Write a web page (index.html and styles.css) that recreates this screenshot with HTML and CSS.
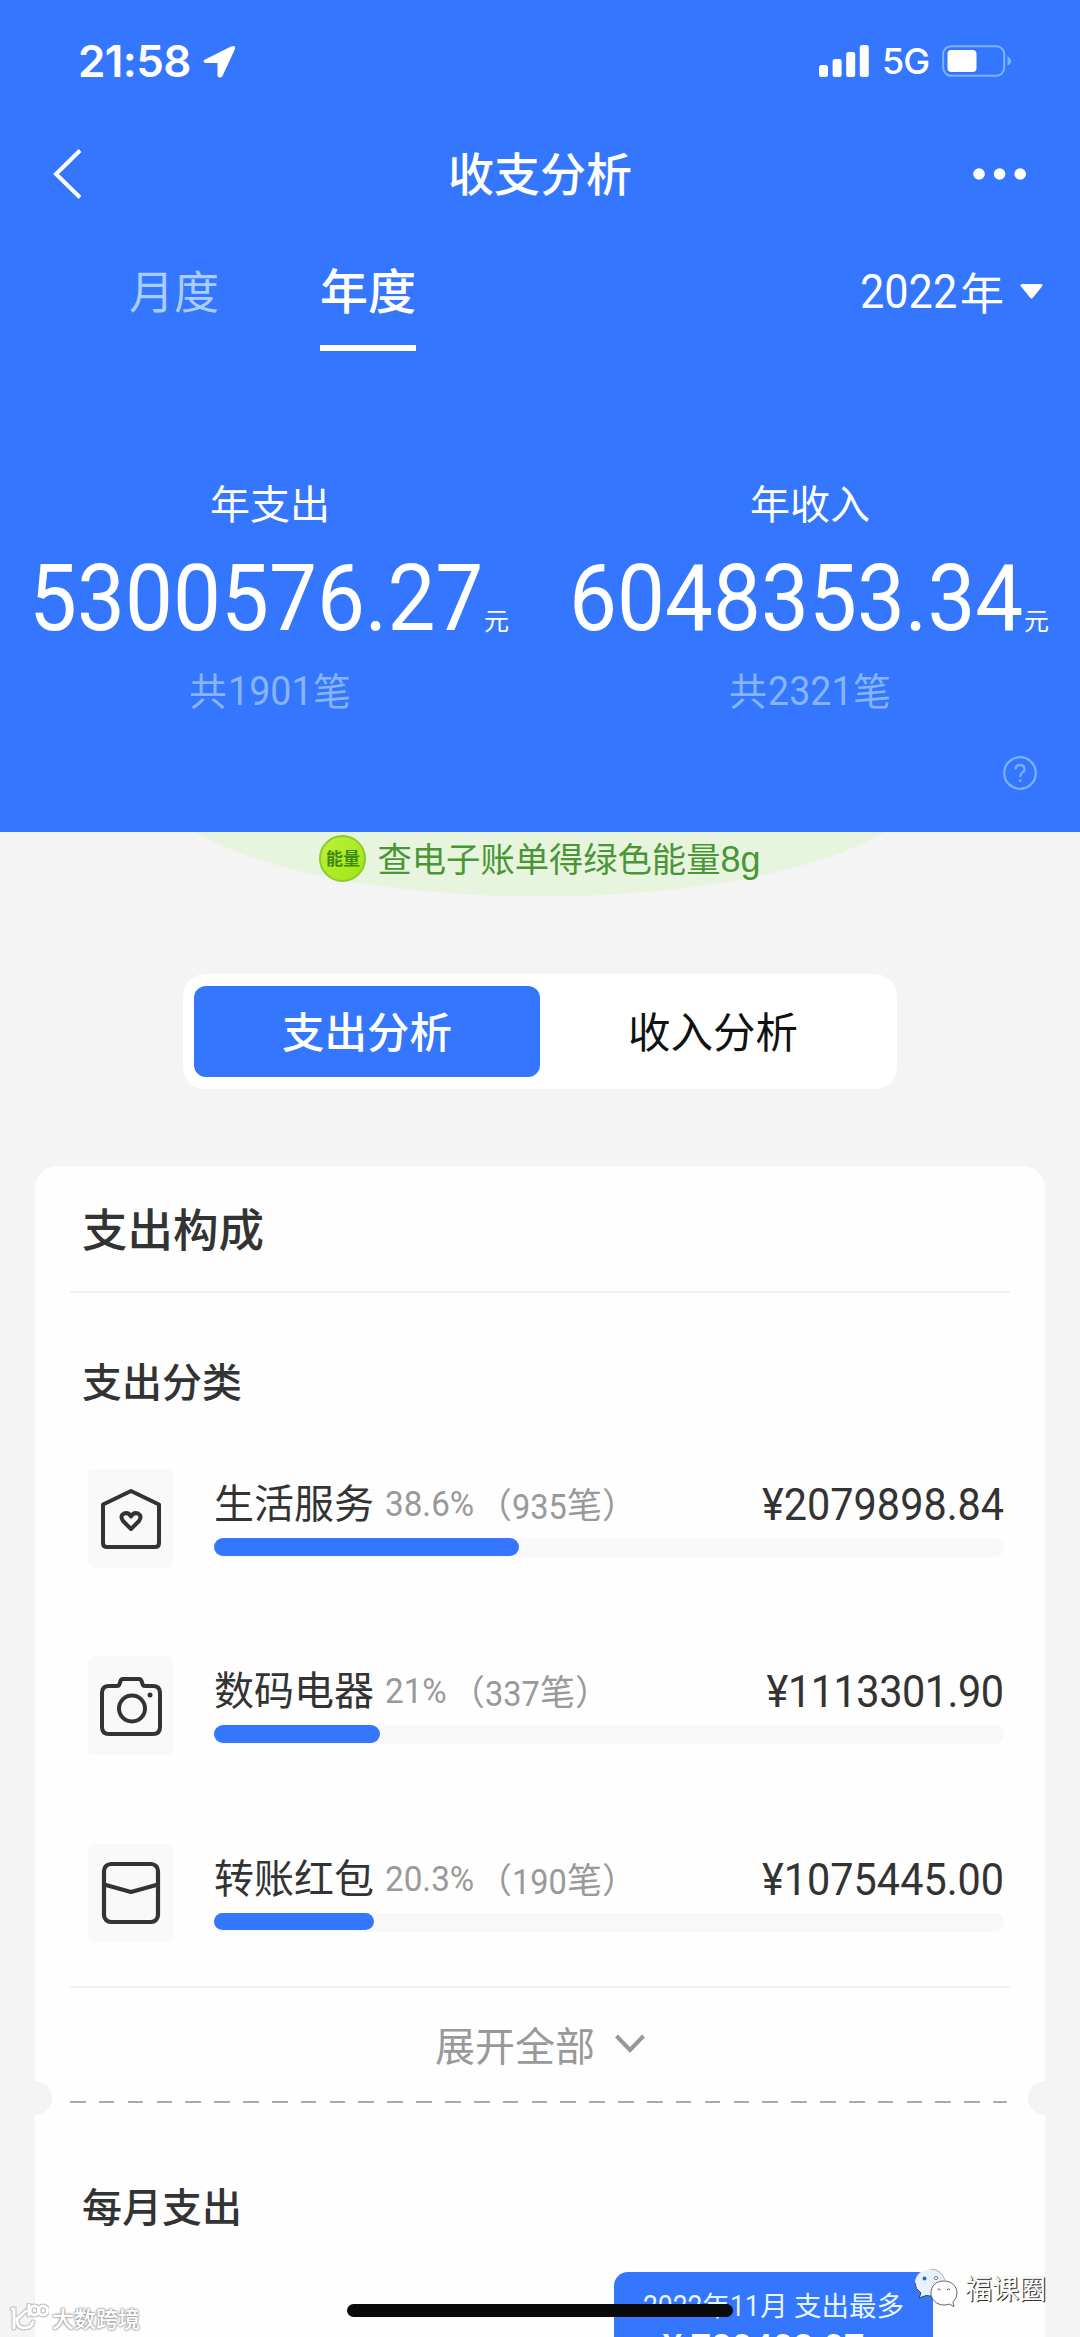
FILE: index.html
```html
<!DOCTYPE html>
<html lang="zh-CN">
<head>
<meta charset="utf-8">
<title>收支分析</title>
<link rel="stylesheet" href="styles.css">
</head>
<body>
<div class="screen">
  <header class="header">
    <div class="status">
      <span class="clock">21:58</span>
      <svg class="locate" width="34" height="35" viewBox="0 0 34 35"><path d="M3 15.500 29 2.500Q34 .500 33 5L20.500 32Q18 35 15.500 32V19H4Q-.500 18 3 15.500Z" fill="#fff"/></svg>
      <span class="status-right">
        <svg width="50" height="32" viewBox="0 0 50 32" fill="#fff"><rect x="0" y="20" width="9" height="12" rx="2.500"/><rect x="13.600" y="14" width="9" height="18" rx="2.500"/><rect x="27.200" y="7" width="9" height="25" rx="2.500"/><rect x="40.800" y="0" width="9" height="32" rx="2.500"/></svg>
        <span class="net">5G</span>
        <svg width="70" height="32" viewBox="0 0 70 32"><rect x="1.200" y="1.200" width="61" height="29.600" rx="8" fill="none" stroke="#7db2ff" stroke-width="2"/><rect x="5.500" y="5" width="29" height="22" rx="4" fill="#fff"/><path d="M65.500 11.500Q69 13 69 16T65.500 20.500Z" fill="#7db2ff"/></svg>
      </span>
    </div>
    <nav class="nav">
      <svg width="30" height="50" viewBox="0 0 30 50"><path d="M27 1.500 3 25 27 48.500" fill="none" stroke="#fff" stroke-width="4"/></svg>
      <h1>收支分析</h1>
      <svg width="54" height="12" viewBox="0 0 54 12" fill="#fff"><circle cx="6" cy="6" r="5.800"/><circle cx="26.600" cy="6" r="5.800"/><circle cx="47.200" cy="6" r="5.800"/></svg>
    </nav>
    <div class="tabs">
      <span class="tab">月度</span>
      <span class="tab active">年度</span>
      <span class="year"><span class="num year-num">2022</span><span class="year-unit">年</span>
        <svg width="23" height="15" viewBox="0 0 23 15"><path d="M2 0H21Q23.500 .500 22 2.500L13 13.500Q11.500 15.500 10 13.500L1 2.500Q-.500 .500 2 0Z" fill="#fff"/></svg></span>
    </div>
    <div class="stats">
      <div class="stat">
        <div class="stat-label">年支出</div>
        <div class="stat-value"><span class="num big-num">5300576.27</span><small>元</small></div>
        <div class="stat-count">共<span class="num count-num">1901</span>笔</div>
      </div>
      <div class="stat">
        <div class="stat-label">年收入</div>
        <div class="stat-value"><span class="num big-num">6048353.34</span><small>元</small></div>
        <div class="stat-count">共<span class="num count-num">2321</span>笔</div>
      </div>
    </div>
    <div class="help">
      <svg width="36" height="36" viewBox="0 0 36 36" fill="none" stroke="#7caefc" stroke-width="2.300"><circle cx="18" cy="18" r="15.800"/><path d="M13.500 14.500Q13.500 10 18 10T22.500 14Q22.500 16.200 20.300 17.600Q18.200 19 18.200 22M18.200 24.500V27"/></svg>
    </div>
  </header>

  <main>
    <div class="energy">
      <span class="energy-badge">能量</span>
      <span class="energy-text">查电子账单得绿色能量<span class="grams">8g</span></span>
    </div>

    <div class="segment">
      <span class="seg on">支出分析</span>
      <span class="seg">收入分析</span>
    </div>

    <section class="card">
      <h2>支出构成</h2>
      <h3>支出分类</h3>
      <ul class="list">
        <li>
          <span class="icon"><svg width="64" height="64" viewBox="0 0 64 64" fill="none" stroke="#333" stroke-width="4" stroke-linejoin="round"><path d="M32 4 60 17.500V56Q60 60 56 60H8Q4 60 4 56V17.500Z"/><path d="M32 42 24 34Q20.500 29 25 26.500Q29.500 25 32 29.500Q34.500 25 39 26.500Q43.500 29 40 34Z"/></svg></span>
          <div class="body">
            <div class="line"><span class="name">生活服务</span><span class="pct num">38.6%</span><span class="cnt">（<span class="num cnt-num">935</span>笔）</span><span class="amt num">¥2079898.84</span></div>
            <div class="track"><div class="fill" style="width:38.6%"></div></div>
          </div>
        </li>
        <li>
          <span class="icon"><svg width="64" height="64" viewBox="0 0 64 64" fill="none" stroke="#333" stroke-width="4" stroke-linejoin="round"><path d="M10 12H18Q20 12 20.500 10L21.500 7Q22 5 24 5H40Q42 5 42.500 7L43.500 10Q44 12 46 12H54Q61 12 61 19V53Q61 60 54 60H10Q3 60 3 53V19Q3 12 10 12Z"/><circle cx="33" cy="34.500" r="13"/><circle cx="51" cy="21" r="2.500" fill="#333" stroke="none"/></svg></span>
          <div class="body">
            <div class="line"><span class="name">数码电器</span><span class="pct short num">21%</span><span class="cnt">（<span class="num cnt-num">337</span>笔）</span><span class="amt tight num">¥1113301.90</span></div>
            <div class="track"><div class="fill" style="width:21%"></div></div>
          </div>
        </li>
        <li>
          <span class="icon"><svg width="64" height="64" viewBox="0 0 64 64" fill="none" stroke="#333" stroke-width="4.200" stroke-linejoin="round"><rect x="5" y="3" width="54" height="58" rx="7"/><path d="M5 23.500 32 31 59 23.500"/></svg></span>
          <div class="body">
            <div class="line"><span class="name">转账红包</span><span class="pct num">20.3%</span><span class="cnt">（<span class="num cnt-num">190</span>笔）</span><span class="amt num">¥1075445.00</span></div>
            <div class="track"><div class="fill" style="width:20.3%"></div></div>
          </div>
        </li>
      </ul>
      <div class="more">展开全部
        <svg width="30" height="20" viewBox="0 0 30 20"><path d="M1.500 2 15 16 28.500 2" fill="none" stroke="#999" stroke-width="4"/></svg>
      </div>
      <div class="ticket"></div>
      <h3 class="monthly">每月支出</h3>
      <div class="tip">
        <div class="tip-title"><span class="num tip-num">2022</span>年<span class="num tip-num2">11</span>月 支出最多</div>
        <div class="tip-amount">¥ 780408.07 ›</div>
      </div>
    </section>
  </main>

  <div class="home-bar"></div>

  <div class="mark-left">
    <svg width="40" height="30" viewBox="0 0 40 30" fill="none" stroke-linecap="round"><g stroke="#bbb" stroke-width="5"><path d="M3 6H5V25M17 8 8 16Q8 25 15 25T24 19M20 2V12"/><circle cx="25.500" cy="7.500" r="4.500"/><circle cx="34" cy="7.500" r="4.500"/></g><g stroke="#fff" stroke-width="3"><path d="M3 6H5V25M17 8 8 16Q8 25 15 25T24 19M20 2V12"/><circle cx="25.500" cy="7.500" r="4.500"/><circle cx="34" cy="7.500" r="4.500"/></g></svg>
    <span>大数跨境</span>
  </div>
  <div class="mark-right">
    <svg width="46" height="40" viewBox="0 0 46 40"><path d="M17 1C8 1 1 7 1 15Q1 21 7 25L5 30 12 27.500Q26 30 31 20L31 12Q28 1 17 1Z" fill="#e9f1ff"/><path d="M1 15Q1 21 7 25L5 30 12 27.500 17 28" fill="none" stroke="#345" stroke-width="1"/><path d="M17 1Q27 1.500 31 12" fill="none" stroke="#999" stroke-width=".800"/><circle cx="10.500" cy="10.500" r="2" fill="#2866df"/><circle cx="22" cy="10" r="1.600" fill="none" stroke="#666" stroke-width=".800"/><path d="M30 13C22 13 17 18 17 25S23 37 30 37Q33 37 35 36L40 38.500 39 34Q43 30 43 25C43 18 37 13 30 13Z" fill="#fff" stroke="#555" stroke-width=".900"/><path d="M23.500 22Q25 19.500 26.500 22M33 22Q34.500 19.500 36 22" fill="none" stroke="#555" stroke-width="1"/></svg>
    <span>福课圈</span>
  </div>
</div>
</body>
</html>
```
FILE: styles.css
```css
* { box-sizing: border-box; margin: 0; padding: 0; }
body { background: #f4f4f4; font-family: "Noto Sans CJK SC", sans-serif; color: #333; }
svg { display: block; flex: none; }
.screen { position: relative; width: 1080px; height: 2337px; overflow: hidden; background: #f4f4f4; white-space: nowrap; line-height: 1; }
.num { display: inline-block; font-family: Roboto, sans-serif; transform: scaleX(.91); transform-origin: left center; }

/* Header */
.header { height: 832px; background: #3476fe; color: #fff; }
.status { display: flex; align-items: center; height: 122px; padding: 0 68px 0 78px; }
.clock { font: 600 44px/1 Inter, sans-serif; letter-spacing: -.6px; width: 124px; }
.status-right { display: flex; align-items: center; margin-left: auto; }
.net { font: 500 36px/1 Inter, sans-serif; width: 60px; margin-left: 13px; letter-spacing: -1px; }
.nav { display: grid; grid-template-columns: 1fr auto 1fr; align-items: center; height: 104px; padding: 0 53px; }
.nav svg:last-child { justify-self: end; }
.nav h1 { padding-bottom: 6px; font-size: 46px; font-weight: 500; }
.tabs { display: flex; height: 125px; padding-left: 129px; }
.tab { font-size: 45px; color: #a9cdff; height: 125px; padding: 41px 0 0; margin-right: 101px; }
.tab.active { font-size: 48px; font-weight: 500; color: #fff; border-bottom: 6px solid #fff; padding-top: 38px; margin-right: 0; }
.year { display: flex; align-items: center; margin: 0 37px 0 auto; font-size: 44px; padding-top: 6px; }
.year-num { font-size: 47.500px; margin-right: -7px; padding-top: 2px; }
.year-unit { padding-bottom: 1px; }
.year svg { margin-left: 16px; }
.stats { display: grid; grid-template-columns: 1fr 1fr; padding-top: 127px; }
.stat { display: flex; flex-direction: column; align-items: center; }
.stat-label { height: 52px; line-height: 48px; font-size: 40px; }
.stat-value { display: flex; align-items: baseline; align-self: stretch; height: 135px; line-height: 137px; padding-left: 29px; }
.big-num { font-size: 93px; width: 455px; transform: scaleX(.918); }
.stat-value small { font-size: 25px; }
.stat-count { height: 50px; line-height: 48px; font-size: 38px; color: #86b4fd; }
.count-num { margin: 0 -5px 0 1px; font-size: 40px; transform: scaleX(.94); }
.help { display: flex; justify-content: flex-end; margin-top: 40px; padding-right: 42px; }

/* Energy strip */
.energy { display: flex; justify-content: center; height: 65px; width: 690px; margin: 0 auto; padding-top: 3px; align-items: flex-start; background: radial-gradient(ellipse 385px 115px at 50% -50px, #e7f5de 99%, transparent 100%); color: #4a9637; font-size: 34.300px; }
.energy-text { line-height: 44px; }
.grams { font-family: "Liberation Sans", sans-serif; font-size: 36px; }
.energy-badge { width: 47px; height: 47px; margin-right: 11px; border-radius: 50%; border: 2px solid #86ce2c; background: linear-gradient(135deg, #bef03c, #a0e512); color: #3c8a13; font-size: 17px; font-weight: 700; line-height: 42px; text-align: center; }

/* Segmented control */
.segment { display: flex; width: 714px; height: 115px; margin: 77px auto 0; padding: 12px 11px; border-radius: 22px; background: #fff; }
.seg { flex: 1; line-height: 88px; text-align: center; font-size: 42.500px; color: #111; }
.seg.on { border-radius: 12px; background: #3476fe; color: #fff; font-weight: 500; }

/* Card */
.card { width: 1010px; height: 1171px; margin: 77px auto 0; padding: 0 35px; border-radius: 22px 22px 0 0; background: #fefefe; }
.card h2 { height: 127px; padding-left: 12px; border-bottom: 2px solid #efefef; font-size: 45.500px; font-weight: 500; line-height: 123px; }
.card h3 { height: 176px; padding-left: 12px; font-size: 40px; font-weight: 500; line-height: 174px; }
.list { display: flex; flex-direction: column; gap: 88.300px; padding-bottom: 43px; list-style: none; border-bottom: 2px solid #efefef; }
.list li { display: flex; height: 99px; padding-left: 18px; }
.icon { display: flex; align-items: center; justify-content: center; width: 85px; height: 99px; border-radius: 6px; background: #f9f9f9; }
.body { width: 790px; margin-left: 41px; }
.line { display: flex; height: 69px; line-height: 65px; }
.name { width: 171px; font-size: 40px; }
.pct { width: 92px; font-size: 35px; line-height: 72px; color: #999; transform: scaleX(.95); }
.pct.short { width: 65px; }
.cnt { font-size: 35px; line-height: 67px; color: #999; }
.cnt-num { margin-right: -4px; transform: scaleX(.93); position: relative; top: 1px; }
.amt { margin-left: auto; font-size: 45px; line-height: 72px; transform: scaleX(.92); transform-origin: right center; }
.amt.tight { letter-spacing: -.5px; }
.track { height: 19px; border-radius: 9px; background: #f8f8f8; }
.fill { height: 17.500px; border-radius: 9px; background: #3476fe; }
.more { display: flex; align-items: center; justify-content: center; gap: 20px; height: 113px; font-size: 40px; color: #999; }
.ticket { position: relative; height: 2px; margin-right: 3px; background: repeating-linear-gradient(90deg, #aaa 0 15.600px, transparent 15.600px 28.850px); }
.ticket::before, .ticket::after { content: ""; position: absolute; top: -20px; width: 34px; height: 34px; border-radius: 50%; background: #f4f4f4; }
.ticket::before { left: -52px; }
.ticket::after { right: -55px; }
.card h3.monthly { height: 169px; padding-top: 15px; }
.tip { width: 319px; height: 65px; margin-left: 544px; padding-top: 17px; border-radius: 14px 14px 0 0; overflow: hidden; background: #3476fe; color: #fff; text-align: center; }
.tip-title { font-size: 27.500px; line-height: 30px; color: #e4f5ff; }
.tip-num { font-size: 29px; margin-right: -6px; }
.tip-num2 { font-size: 29px; margin-right: -2px; }
.tip-amount { margin-top: 6px; font: 500 36px/42px Roboto, sans-serif; }

/* Overlays */
.home-bar { position: absolute; left: 347px; top: 2304px; width: 386px; height: 13px; border-radius: 7px; background: #0a0a0a; }
.mark-left { position: absolute; left: 9px; top: 2303px; display: flex; gap: 3px; color: #fff; font-size: 22px; font-weight: 500; line-height: 28px; text-shadow: 0 0 2px #999, 0 0 2px #999, 0 0 3px #aaa; }
.mark-right { position: absolute; left: 914px; top: 2268px; display: flex; gap: 5px; color: #fff; font-size: 27px; line-height: 39px; text-shadow: 1px 1px 0 #333, 1px 0 1px #666; }
```
